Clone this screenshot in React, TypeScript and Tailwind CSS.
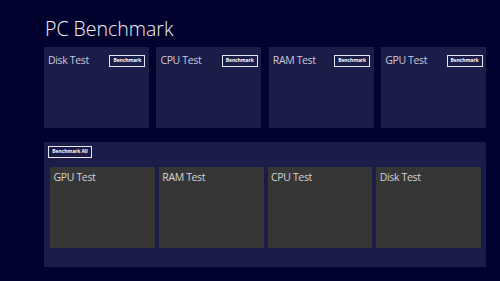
const tests = ['Disk Test', 'CPU Test', 'RAM Test', 'GPU Test'];
const queue = ['GPU Test', 'RAM Test', 'CPU Test', 'Disk Test'];

function OutlineButton({ label, className }: { label: string; className: string }) {
  return (
    <button
      className={`flex items-center justify-center whitespace-nowrap border-[1.5px] border-[#e6e6ee] text-[5px] font-bold leading-none tracking-[-0.1px] text-white ${className}`}
    >
      {label}
    </button>
  );
}

export default function App() {
  return (
    <div className="h-[281px] w-[500px] bg-[#02022f] pl-[44px] pr-[14px] pt-[15px] font-['Open_Sans',sans-serif]">
      <h1 className="pl-[1px] text-[19.5px] font-light leading-[28px] text-[#f2f2f6]">PC Benchmark</h1>

      <div className="mt-[4px] grid grid-cols-4 gap-[7.5px]">
        {tests.map((t) => (
          <div key={t} className="flex h-[81px] items-start justify-between bg-[#1c1c48] pl-[4px] pr-[3.5px] pt-[6px]">
            <div className="text-[10.5px] leading-[14px] tracking-[-0.35px] text-[#c9c9d8]">{t}</div>
            <OutlineButton label="Benchmark" className="mt-[1.5px] h-[12px] w-[36px]" />
          </div>
        ))}
      </div>

      <div className="mt-[14px] h-[125px] bg-[#1c1c48] pl-[4px] pr-[5px] pt-[4px]">
        <OutlineButton label="Benchmark All" className="h-[11.5px] w-[44px]" />
        <div className="ml-[2px] mt-[9px] grid grid-cols-4 gap-[4px]">
          {queue.map((t) => (
            <div key={t} className="h-[81px] bg-[#363636] pl-[3.5px] pt-[3px]">
              <div className="text-[10.5px] leading-[14px] tracking-[-0.35px] text-[#d4d4d4]">{t}</div>
            </div>
          ))}
        </div>
      </div>
    </div>
  );
}
